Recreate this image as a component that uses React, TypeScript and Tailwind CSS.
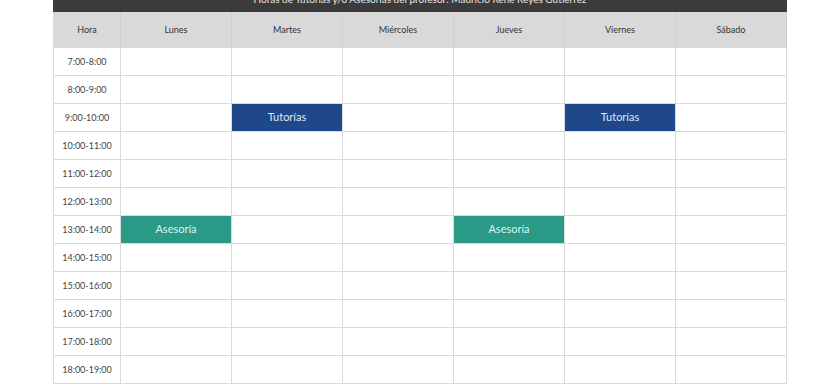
import React from "react";

const days = ["Lunes", "Martes", "Miércoles", "Jueves", "Viernes", "Sábado"];

const hours = [
  "7:00-8:00",
  "8:00-9:00",
  "9:00-10:00",
  "10:00-11:00",
  "11:00-12:00",
  "12:00-13:00",
  "13:00-14:00",
  "14:00-15:00",
  "15:00-16:00",
  "16:00-17:00",
  "17:00-18:00",
  "18:00-19:00",
];

type Slot = { label: string; kind: "tutoria" | "asesoria" };

// key: "hourIndex-dayIndex"
const slots: Record<string, Slot> = {
  "2-1": { label: "Tutorías", kind: "tutoria" },
  "2-4": { label: "Tutorías", kind: "tutoria" },
  "6-0": { label: "Asesoría", kind: "asesoria" },
  "6-3": { label: "Asesoría", kind: "asesoria" },
};

export default function App() {
  return (
    <div className="w-[840px] h-[385px] overflow-hidden bg-white font-['Lato','Noto_Sans',sans-serif]">
      <div className="ml-[53px] w-[734px]">
        <div className="h-[12px] overflow-hidden bg-[#3b3b3b] text-center">
          <div className="-mt-[9px] text-[10px] leading-[16px] text-[#e6e6e6]">
            Horas de Tutorías y/o Asesorías del profesor: Mauricio René Reyes Gutiérrez
          </div>
        </div>
        <div className="grid grid-cols-[67px_repeat(6,111px)] border-l border-r border-[#dadada]">
          <div className="h-[36px] flex items-center justify-center bg-[#d9d9d9] border-r border-[#cfcfcf] text-[9px] text-[#333]">
            Hora
          </div>
          {days.map((d) => (
            <div
              key={d}
              className="h-[36px] flex items-center justify-center bg-[#d9d9d9] border-r border-[#cfcfcf] last:border-r-0 text-[9px] text-[#333]"
            >
              {d}
            </div>
          ))}
          {hours.map((h, hi) => (
            <React.Fragment key={h}>
              <div className="h-[28px] flex items-center justify-center border-r border-b border-[#dadada] text-[9px] text-[#444]">
                {h}
              </div>
              {days.map((d, di) => {
                const s = slots[`${hi}-${di}`];
                if (s) {
                  return (
                    <div
                      key={d}
                      className={`h-[28px] flex items-center justify-center border-b border-r border-[#dadada] text-[11px] ${
                        s.kind === "tutoria"
                          ? "bg-[#1e4889] text-[#dfe7f5]"
                          : "bg-[#2a9a86] text-[#dff3ef]"
                      }`}
                    >
                      {s.label}
                    </div>
                  );
                }
                return (
                  <div
                    key={d}
                    className={`h-[28px] border-b border-[#dadada] ${di < 5 ? "border-r" : ""}`}
                  />
                );
              })}
            </React.Fragment>
          ))}
        </div>
      </div>
    </div>
  );
}
